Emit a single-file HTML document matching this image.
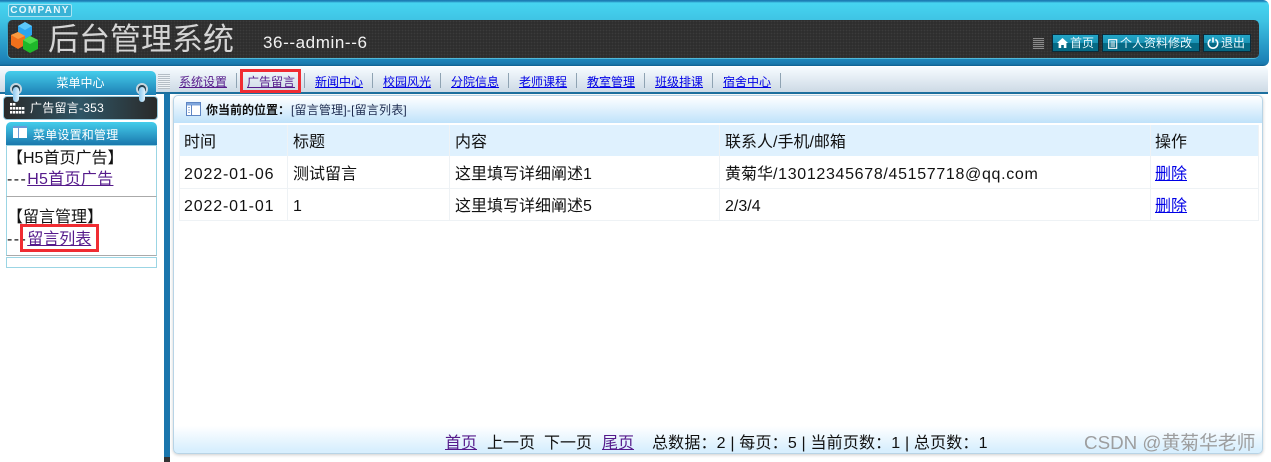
<!DOCTYPE html>
<html><head><meta charset="utf-8"><style>
html,body{margin:0;padding:0;width:1271px;height:462px;overflow:hidden;background:#fff}
body{position:relative;font-family:"Liberation Sans","Noto Sans CJK SC",sans-serif;color:#111}
div,a,svg{position:absolute;box-sizing:border-box}
span{position:static}
.t{white-space:nowrap;line-height:1}
.l{font-size:16px;letter-spacing:.85px}
.z{font-size:16px}
a.b{color:#0000e6;text-decoration:underline}
a.v{color:#551a8b;text-decoration:underline}
.nav{font-size:12px;top:75px;height:14px;line-height:14px;white-space:nowrap}
.sep{top:73px;width:1px;height:15px;background:#8fa3b3}
.btn{top:34px;height:18px;border:1px solid #0b2b3a;background:linear-gradient(#22a5c6 0,#1b93b5 50%,#056a85 50%,#056a85 100%);color:#e8f6fb;font-size:12px;line-height:16px;white-space:nowrap}
.vl{width:1px;background:#eef2f5;top:125px;height:96px}
</style></head><body>
<!-- header -->
<div style="left:0;top:0;width:1269px;height:66px;background:linear-gradient(#1d7db5 0,#1d7db5 1px,#46d4f1 3px,#3fc4e4 20px,#1d83b8 60px,#1a78ac 64px,#0f5f8f 66px);border-radius:0 6px 6px 0"></div>
<div style="left:7px;top:20px;width:1252px;height:39px;border-radius:5px;background-color:#2e2e2e;background-image:radial-gradient(#3b3b3b 35%,transparent 40%);background-size:3px 3px;border-bottom:1px solid #50b8d8;border-left:1px solid #3aa6c8"></div>
<div class="t" style="left:8px;top:4px;width:64px;height:13px;border:1px solid #a8e3f2;border-radius:2px;background:#39b3d6;color:#e8f8fc;font-size:10px;font-weight:bold;letter-spacing:1.3px;line-height:11px;text-align:center">COMPANY</div>
<svg style="left:9px;top:20px" width="32" height="36" viewBox="0 0 32 36">
<path d="M9 6l7-4 7 4v9l-7 4-7-4z" fill="#2aa6f0"/><path d="M9 6l7 4 7-4-7-4z" fill="#5cc8fa"/>
<path d="M2 15l7-3 7 4v9l-7 4-7-4z" fill="#f0701c"/><path d="M2 15l7 4 7-3-7-4z" fill="#fa9a40"/>
<path d="M14 20l7-4 8 4v9l-8 4-7-4z" fill="#1fb82a"/><path d="M14 20l7 4 8-4-8-4z" fill="#4fdc50"/>
</svg>
<div class="t" style="left:48px;top:24px;font-size:31px;color:#d4d4d4">后台管理系统</div>
<div class="t" style="left:263px;top:34px;font-size:17px;color:#f2f2f2;letter-spacing:.6px">36--admin--6</div>
<div style="left:1033px;top:38px;width:11px;height:11px;background:repeating-linear-gradient(#8a8a8a 0,#8a8a8a 1px,#3a3a3a 1px,#3a3a3a 2px)"></div>
<div class="btn" style="left:1052px;width:47px;padding-left:17px">首页</div>
<svg style="left:1057px;top:38px" width="11" height="10" viewBox="0 0 11 10"><path d="M5.5 0L0 5h1.6v5h2.6V7h2.6v3h2.6V5H11z" fill="#fff"/></svg>
<div class="btn" style="left:1102px;width:98px;padding-left:17px">个人资料修改</div>
<svg style="left:1108px;top:39px" width="10" height="10" viewBox="0 0 10 10"><path d="M.7.7h8v8.6h-8zM2.5 3h4.5M2.5 5h4.5M2.5 7h4.5" fill="none" stroke="#fff" stroke-width="1.1"/></svg>
<div class="btn" style="left:1203px;width:48px;padding-left:17px">退出</div>
<svg style="left:1207px;top:37px" width="12" height="12" viewBox="0 0 12 12"><path d="M3.6 2.4A4.7 4.7 0 1 0 8.4 2.4M6 .5v5" fill="none" stroke="#fff" stroke-width="1.6"/></svg>
<!-- nav bar -->
<div style="left:0;top:67px;width:1268px;height:27px;background:linear-gradient(#f6fbff,#cddae5);border-radius:0 4px 0 0;border-bottom:2px solid #1d6f9e"></div>
<div style="left:158px;top:74px;width:12px;height:15px;background:repeating-linear-gradient(#b5bec6 0,#b5bec6 1px,#eef3f7 1px,#eef3f7 2px)"></div>
<a class="nav v" style="left:179px">系统设置</a><div class="sep" style="left:236px"></div>
<a class="nav v" style="left:247px">广告留言</a><div class="sep" style="left:304px"></div>
<a class="nav b" style="left:315px">新闻中心</a><div class="sep" style="left:372px"></div>
<a class="nav b" style="left:383px">校园风光</a><div class="sep" style="left:440px"></div>
<a class="nav b" style="left:451px">分院信息</a><div class="sep" style="left:508px"></div>
<a class="nav b" style="left:519px">老师课程</a><div class="sep" style="left:576px"></div>
<a class="nav b" style="left:587px">教室管理</a><div class="sep" style="left:644px"></div>
<a class="nav b" style="left:655px">班级排课</a><div class="sep" style="left:712px"></div>
<a class="nav b" style="left:723px">宿舍中心</a><div class="sep" style="left:780px"></div>
<div style="left:240px;top:69px;width:61px;height:24px;border:3px solid #f02c32"></div>
<!-- left column -->
<div style="left:0;top:94px;width:164px;height:368px;background:#fff"></div>
<div style="left:164px;top:94px;width:6px;height:363px;background:#1a76ad"></div>
<div style="left:164px;top:457px;width:6px;height:5px;background:#333"></div>
<div style="left:5px;top:71px;width:151px;height:24px;border-radius:5px 5px 0 0;background:linear-gradient(#45cdeb,#1d7fb4)"></div>
<div class="t" style="left:5px;top:77px;width:151px;text-align:center;font-size:12px;color:#fff">菜单中心</div>
<div style="left:3px;top:96px;width:155px;height:24px;border-radius:4px;background-color:#2c3e46;background-image:linear-gradient(90deg,#2a2a2a 0,#2f5666 50%,#2a2a2a 100%);border:1px solid #95c9dd"></div>
<svg style="left:10px;top:103px" width="16" height="11" viewBox="0 0 16 11" fill="#fff">
<rect x="0" y="0" width="2.4" height="2.6"/><rect x="3" y="0" width="2.4" height="2.6"/>
<rect x="0" y="4" width="2.4" height="2.6"/><rect x="3" y="4" width="2.4" height="2.6"/><rect x="6" y="4" width="2.4" height="2.6"/><rect x="9" y="4" width="2.4" height="2.6"/><rect x="12" y="4" width="2.4" height="2.6"/>
<rect x="0" y="8" width="2.4" height="2.6"/><rect x="3" y="8" width="2.4" height="2.6"/><rect x="6" y="8" width="2.4" height="2.6"/><rect x="9" y="8" width="2.4" height="2.6"/><rect x="12" y="8" width="2.4" height="2.6"/>
</svg>
<div class="t" style="left:30px;top:102px;font-size:12px;color:#fff;letter-spacing:.25px">广告留言-353</div>
<div style="left:10px;top:83px;width:12px;height:12px;border-radius:50%;border:2px solid #c8d6de;background:#24404f"></div>
<div style="left:13px;top:87px;width:6px;height:15px;border-radius:3px;background:linear-gradient(90deg,#8cc8ee,#dff1fc)"></div>
<div style="left:136px;top:83px;width:12px;height:12px;border-radius:50%;border:2px solid #c8d6de;background:#24404f"></div>
<div style="left:139px;top:87px;width:6px;height:15px;border-radius:3px;background:linear-gradient(90deg,#8cc8ee,#dff1fc)"></div>
<div style="left:6px;top:122px;width:151px;height:23px;border-radius:5px 5px 0 0;background:linear-gradient(#45cdeb,#1a78ad)"></div>
<svg style="left:13px;top:125px" width="14" height="14" viewBox="0 0 14 14"><path d="M0 1h14v12H0z" fill="#fff"/><path d="M0 1h14v2H0zM5 3h1v10H5z" fill="#6a9bd8"/></svg>
<div class="t" style="left:33px;top:129px;font-size:12px;color:#fff;letter-spacing:.2px">菜单设置和管理</div>
<div style="left:6px;top:145px;width:151px;height:52px;border:1px solid #9bd5e4;border-bottom:1px solid #aaa"></div>
<div style="left:6px;top:197px;width:151px;height:59px;border-left:1px solid #9bd5e4;border-right:1px solid #9bd5e4;border-bottom:1px solid #aaa"></div>
<div style="left:6px;top:257px;width:151px;height:11px;border:1px solid #9bd5e4"></div>
<div class="t z" style="left:7px;top:151px">【H5首页广告】</div>
<div class="t z" style="left:7px;top:172px"><span style="letter-spacing:1.4px">---</span><a class="v" style="position:static;letter-spacing:.3px">H5首页广告</a></div>
<div class="t z" style="left:7px;top:210px">【留言管理】</div>
<div class="t z" style="left:7px;top:232px"><span style="letter-spacing:1.4px">---</span><a class="v" style="position:static">留言列表</a></div>
<div style="left:20px;top:224px;width:79px;height:28px;border:3px solid #f02c32"></div>
<!-- main panel -->
<div style="left:173px;top:95px;width:1090px;height:359px;border:1px solid #b8d4e6;border-radius:5px;background:linear-gradient(#fff 0,#bfe2fa 27px,#fff 27px,#fff 330px,#d8effe 354px);box-shadow:0 1px 3px rgba(0,0,0,.2)"></div>
<svg style="left:186px;top:102px" width="15" height="14" viewBox="0 0 15 14"><path d="M.5.5h14v13H.5z" fill="#fff" stroke="#5e86c4"/><path d="M1 1h13v2.5H1z" fill="#7fa6dc"/><path d="M5.5 3v10" stroke="#5e86c4"/><path d="M2 5.5h2M2 8h2M2 10.5h2" stroke="#99b4d8"/></svg>
<div class="t" style="left:206px;top:104px;font-size:12px;font-weight:bold">你当前的位置：</div>
<div class="t" style="left:291px;top:104px;font-size:12px;color:#1d2b4f;letter-spacing:.2px">[留言管理]-[留言列表]</div>
<!-- table -->
<div style="left:179px;top:125px;width:1080px;height:31px;background:#dff1fe"></div>
<div style="left:179px;top:188px;width:1080px;height:1px;background:#eef2f5"></div>
<div style="left:179px;top:220px;width:1080px;height:1px;background:#eef2f5"></div>
<div class="vl" style="left:179px"></div><div class="vl" style="left:287px"></div><div class="vl" style="left:449px"></div><div class="vl" style="left:719px"></div><div class="vl" style="left:1150px"></div><div class="vl" style="left:1258px"></div>
<div class="t z" style="left:184px;top:135px">时间</div>
<div class="t z" style="left:293px;top:135px">标题</div>
<div class="t z" style="left:455px;top:135px">内容</div>
<div class="t z" style="left:725px;top:135px">联系人/手机/邮箱</div>
<div class="t z" style="left:1155px;top:135px">操作</div>
<div class="t l" style="left:184px;top:167px">2022-01-06</div>
<div class="t z" style="left:293px;top:167px">测试留言</div>
<div class="t l" style="left:455px;top:167px;letter-spacing:0">这里填写详细阐述1</div>
<div class="t z" style="left:725px;top:167px">黄菊华<span style="letter-spacing:.67px">/13012345678/45157718@qq.com</span></div>
<a class="t z b" style="left:1155px;top:167px">删除</a>
<div class="t l" style="left:184px;top:199px">2022-01-01</div>
<div class="t l" style="left:293px;top:199px">1</div>
<div class="t l" style="left:455px;top:199px;letter-spacing:0">这里填写详细阐述5</div>
<div class="t l" style="left:725px;top:199px;letter-spacing:0">2/3/4</div>
<a class="t z b" style="left:1155px;top:199px">删除</a>
<!-- pager -->
<a class="t z v" style="left:445px;top:436px">首页</a>
<div class="t z" style="left:487px;top:436px">上一页</div>
<div class="t z" style="left:544px;top:436px">下一页</div>
<a class="t z v" style="left:602px;top:436px">尾页</a>
<div class="t z" style="left:652px;top:436px;letter-spacing:.17px">总数据：2 | 每页：5 | 当前页数：1 | 总页数：1</div>
<div class="t" style="left:1084px;top:434px;font-size:18.8px;color:#9a9a9a;opacity:.95">CSDN @黄菊华老师</div>
</body></html>
